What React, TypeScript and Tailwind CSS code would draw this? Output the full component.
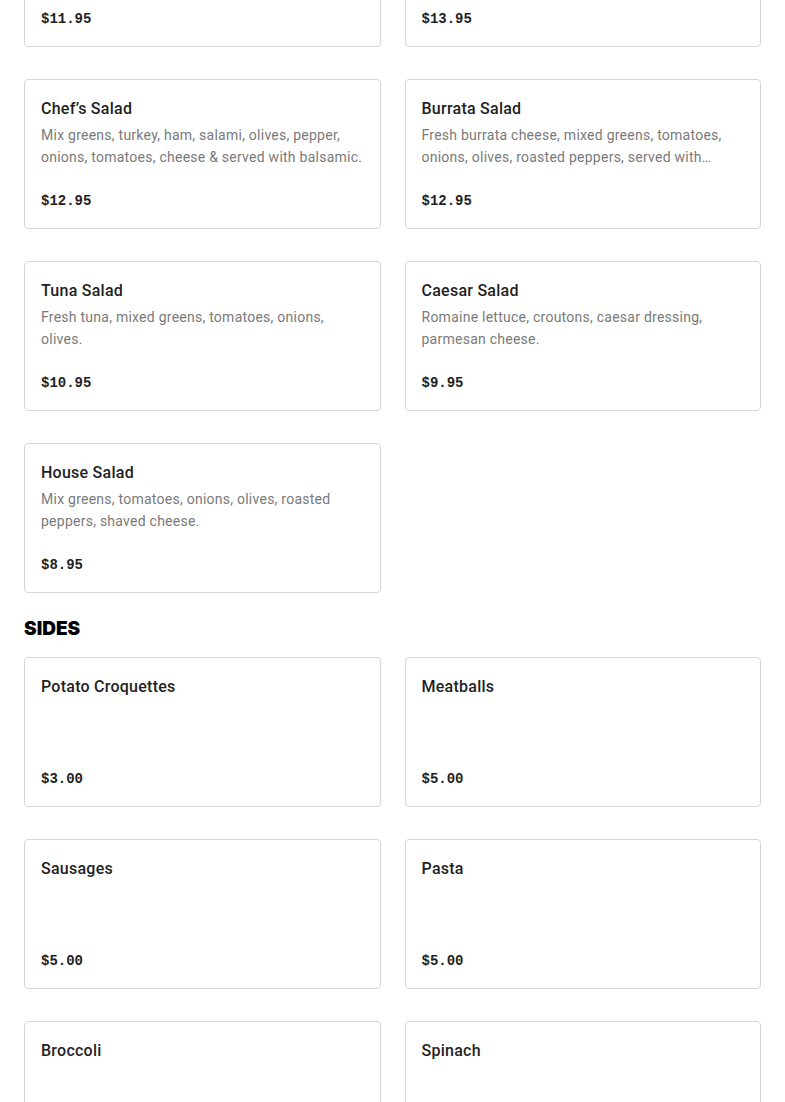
import React from "react";

type Item = { name: string; desc?: string; price: string };

const salads: Item[] = [
  { name: "Greek Salad", desc: "Mix greens, tomatoes, cucumbers, onions, olives, feta cheese.", price: "$11.95" },
  { name: "Grilled Chicken Salad", desc: "Grilled chicken, mixed greens, tomatoes, onions, olives.", price: "$13.95" },
  {
    name: "Chef’s Salad",
    desc: "Mix greens, turkey, ham, salami, olives, pepper, onions, tomatoes, cheese & served with balsamic.",
    price: "$12.95",
  },
  {
    name: "Burrata Salad",
    desc: "Fresh burrata cheese, mixed greens, tomatoes, onions, olives, roasted peppers, served with balsamic glaze.",
    price: "$12.95",
  },
  { name: "Tuna Salad", desc: "Fresh tuna, mixed greens, tomatoes, onions, olives.", price: "$10.95" },
  { name: "Caesar Salad", desc: "Romaine lettuce, croutons, caesar dressing, parmesan cheese.", price: "$9.95" },
  { name: "House Salad", desc: "Mix greens, tomatoes, onions, olives, roasted peppers, shaved cheese.", price: "$8.95" },
];

const sides: Item[] = [
  { name: "Potato Croquettes", price: "$3.00" },
  { name: "Meatballs", price: "$5.00" },
  { name: "Sausages", price: "$5.00" },
  { name: "Pasta", price: "$5.00" },
  { name: "Broccoli", price: "$5.00" },
  { name: "Spinach", price: "$5.00" },
];

const MenuCard = ({ name, desc, price }: Item) => {
  return (
    <div className="h-[150px] flex flex-col rounded-[4px] border border-[#d6d6d6] bg-white px-4 pt-[17px] pb-[15px]">
      <h3 className="text-[16px] leading-6 font-medium tracking-[0.25px] text-[#1f1f1f]">{name}</h3>
      {desc && (
        <p className="mt-[3px] text-[14px] leading-[22px] tracking-[0.25px] text-[#7a7a7a] line-clamp-2">
          {desc}
        </p>
      )}
      <p
        className="mt-auto text-[14px] leading-6 font-bold text-[#1f1f1f]"
        style={{ fontFamily: '"Liberation Mono", monospace' }}
      >
        {price}
      </p>
    </div>
  );
};

export default function App() {
  return (
    <div
      className="h-[1102px] overflow-hidden bg-white px-6"
      style={{ fontFamily: "Roboto, 'Noto Sans', sans-serif" }}
    >
      <div className="-mt-[103px] grid grid-cols-2 gap-x-6 gap-y-8">
        {salads.map((s) => (
          <MenuCard key={s.name} {...s} />
        ))}
      </div>

      <h2
        className="mt-[22px] mb-[14px] text-[19px] leading-7 font-black text-black"
        style={{ fontFamily: "Inter, sans-serif" }}
      >
        SIDES
      </h2>

      <div className="grid grid-cols-2 gap-x-6 gap-y-8">
        {sides.map((s) => (
          <MenuCard key={s.name} {...s} />
        ))}
      </div>
    </div>
  );
}
